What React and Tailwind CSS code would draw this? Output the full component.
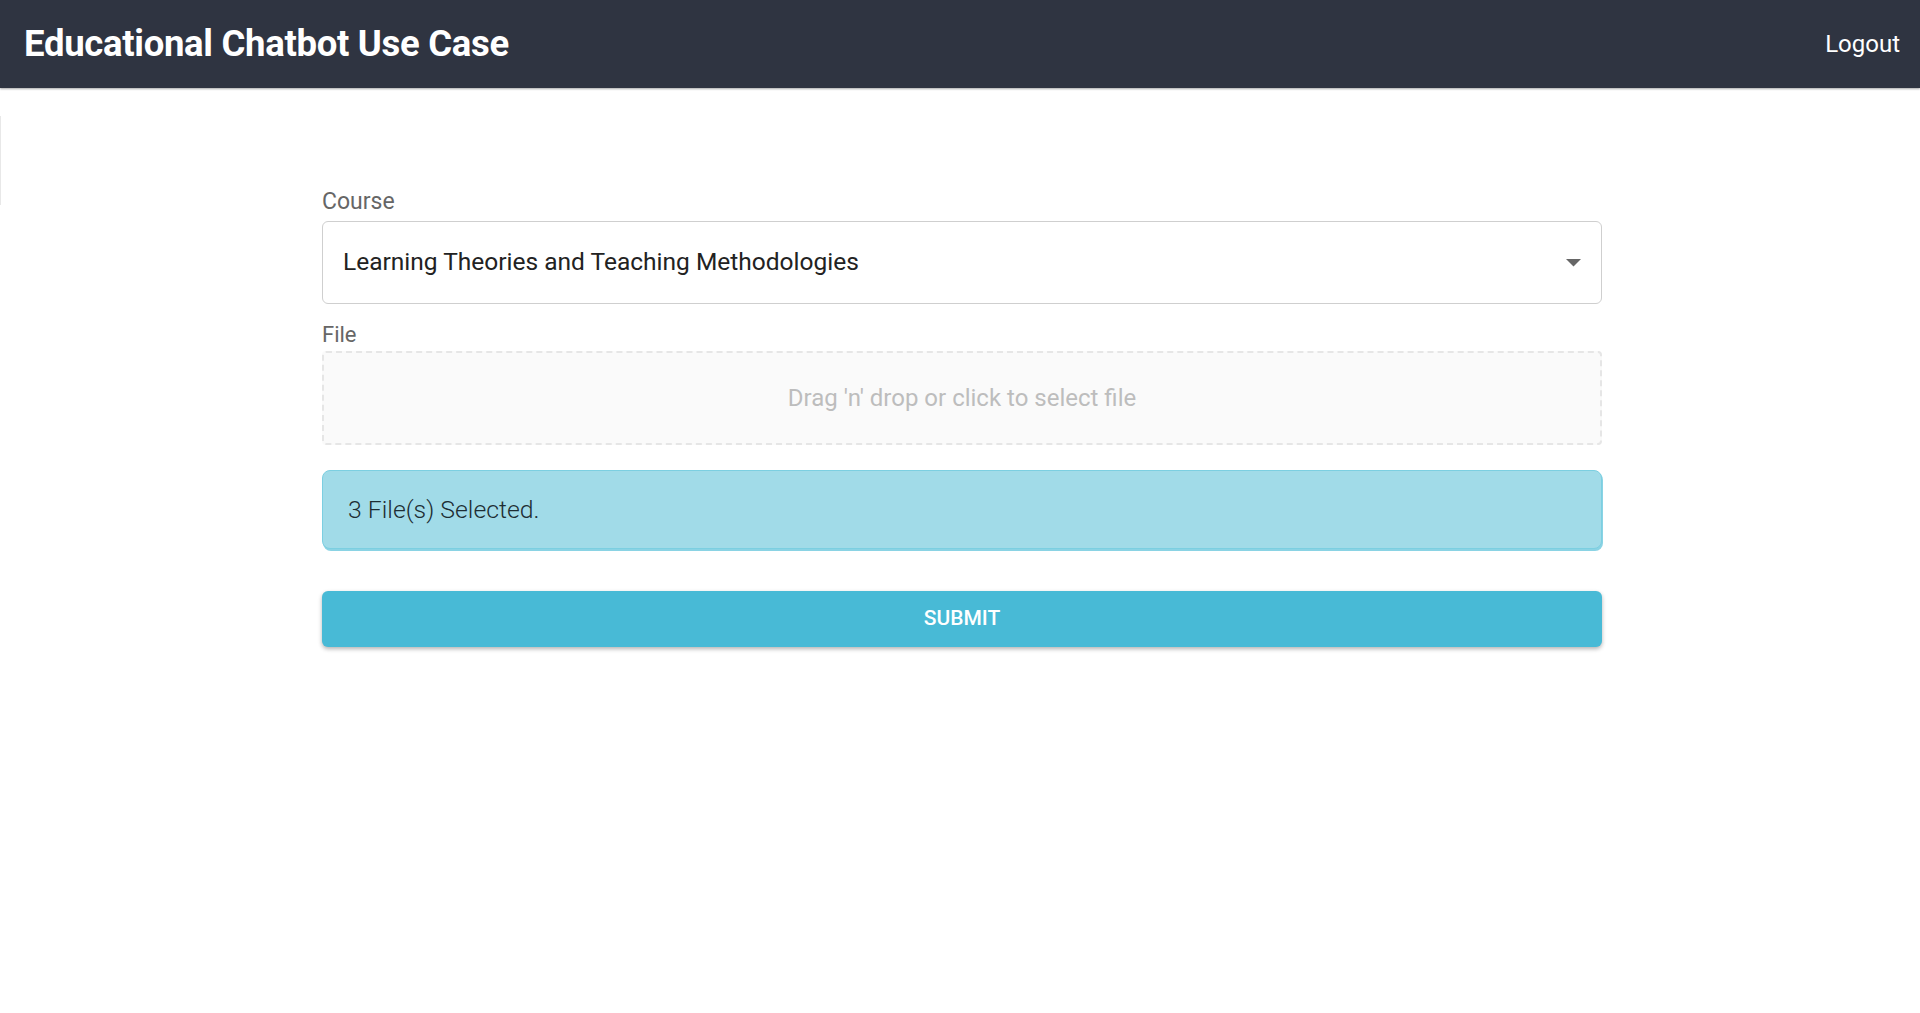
export default function App() {
  return (
    <div className="min-h-screen bg-white font-['Roboto',sans-serif]">
      <header className="h-[88px] bg-[#2f3441] flex items-center justify-between pl-6 pr-5 shadow-[0_1px_2px_rgba(0,0,0,0.35)]">
        <h1 className="text-[36.5px] font-bold text-white tracking-[-0.3px]">Educational Chatbot Use Case</h1>
        <button className="text-[24px] text-white">Logout</button>
      </header>

      <div className="flex">
        <div className="w-px h-[89px] mt-[28px] bg-[#e8e8e8]" />
        <main className="flex-1 pt-[101px]">
          <div className="w-[1280px] ml-[321px] flex flex-col">
            <label className="text-[23px] text-[#666] leading-[26px]">Course</label>
            <div className="mt-[6px] h-[83px] border border-[#cfcfcf] rounded-md flex items-center justify-between pl-5 pr-5">
              <span className="text-[24.5px] text-[#222]">Learning Theories and Teaching Methodologies</span>
              <svg width="15" height="8" viewBox="0 0 15 8">
                <path d="M0 0 L15 0 L7.5 7.5 Z" fill="#666" />
              </svg>
            </div>

            <label className="mt-[18px] text-[22px] text-[#666] leading-[26px]">File</label>
            <div className="mt-[3px] h-[94px] border-2 border-dashed border-[#e6e6e6] bg-[#fafafa] rounded-sm flex items-center justify-center">
              <span className="text-[24px] text-[#bdbdbd]">Drag 'n' drop or click to select file</span>
            </div>

            <div className="mt-[25px] h-[79px] rounded-lg bg-[#a1dbe8] border border-[#7ccfe1] shadow-[1px_2px_0_#8ad3e4] flex items-center px-[25px]">
              <span className="text-[24.8px] font-light text-[#1d2d33]">3 File(s) Selected.</span>
            </div>

            <button className="mt-[42px] h-[56px] rounded-md bg-[#48bad6] text-white text-[21px] font-medium uppercase shadow-[0_2px_4px_rgba(0,0,0,0.3)]">
              Submit
            </button>
          </div>
        </main>
      </div>
    </div>
  )
}
